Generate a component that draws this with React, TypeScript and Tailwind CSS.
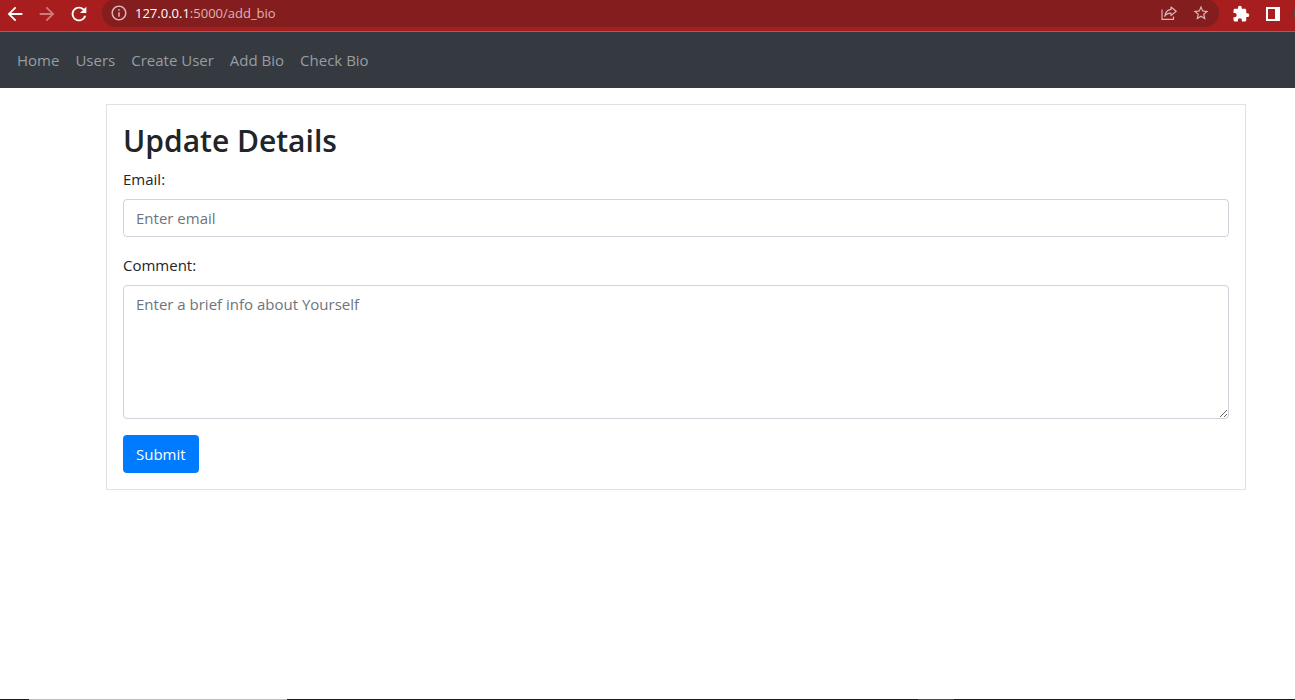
import React from 'react';
import { MdArrowBack, MdArrowForward, MdExtension, MdInfoOutline, MdRefresh, MdStarBorder } from 'react-icons/md';

const links = [
  { label: 'Home', href: '#home' },
  { label: 'Users', href: '#users' },
  { label: 'Create User', href: '#create-user' },
  { label: 'Add Bio', href: '#add-bio' },
  { label: 'Check Bio', href: '#check-bio' },
];

function ShareIcon() {
  return (
    <svg width="16" height="16" viewBox="0 0 16 16" fill="none" stroke="currentColor" strokeWidth="1.2">
      <path d="M1 4.5V14.4H12.5V11.5" />
      <path d="M10 2L15.2 6.3L10 10.6V8.2C7 8.2 5 9.3 3.8 11.3C4.2 7.8 6.2 5 10 4.4Z" strokeLinejoin="round" />
    </svg>
  );
}

function SidePanelIcon() {
  return (
    <svg width="14" height="14" viewBox="0 0 14 14" fill="currentColor">
      <path fillRule="evenodd" d="M0 0H14V14H0ZM2 2V12H9V2Z" />
    </svg>
  );
}

function IconButton({ label, className = '', children }: { label: string; className?: string; children: React.ReactNode }) {
  return (
    <button type="button" aria-label={label} className={`flex h-6 w-8 shrink-0 items-center justify-center ${className}`}>
      {children}
    </button>
  );
}

function BrowserBar() {
  return (
    <header className="flex h-8 items-start overflow-hidden border-b border-[#b9555a] bg-[#a81e1f] text-white">
      <div className="-ml-px flex h-[27px] w-[103px] shrink-0 items-center">
        <IconButton label="Back"><MdArrowBack size={22} /></IconButton>
        <IconButton label="Forward" className="text-[#d07a7b]"><MdArrowForward size={22} /></IconButton>
        <IconButton label="Reload"><MdRefresh size={22} /></IconButton>
      </div>
      <div className="-mt-px flex h-7 min-w-0 flex-1 items-center rounded-full bg-[#841d1e] pl-2 text-[#dcb4b5]">
        <MdInfoOutline size={18} className="mr-[7px] shrink-0" />
        <span className="min-w-0 flex-1 truncate pt-px text-[13px]">
          <span className="text-white">127.0.0.1</span>:5000/add_bio
        </span>
        <IconButton label="Share"><ShareIcon /></IconButton>
        <IconButton label="Bookmark"><MdStarBorder size={18} /></IconButton>
        <span className="w-0.5" />
      </div>
      <div className="flex h-[27px] shrink-0 items-center pl-1.5">
        <IconButton label="Extensions"><MdExtension size={18} /></IconButton>
        <IconButton label="Side panel"><SidePanelIcon /></IconButton>
        <span className="ml-[5px] h-2 w-px bg-[#5b4a4c]" />
      </div>
    </header>
  );
}

const control =
  'block w-full rounded border border-[#ced4da] bg-white px-3 py-1.5 text-[15px] leading-6 text-[#495057] placeholder:text-[#6c757d] placeholder:opacity-100';

export default function App() {
  return (
    <div className="flex min-h-screen flex-col bg-white font-['Segoe_UI','Open_Sans',sans-serif] text-[#212529]">
      <BrowserBar />
      <nav className="flex h-14 items-center gap-4 bg-[#343a40] px-[17px] text-[15px] leading-6 text-[#999da0]">
        {links.map((link) => (
          <a key={link.label} href={link.href} className="whitespace-nowrap">
            {link.label}
          </a>
        ))}
      </nav>
      <main className="flex-1 pt-4 pl-[57px]">
        <form className="mx-auto max-w-[1140px] border border-[#dee2e6] p-4" onSubmit={(e) => e.preventDefault()}>
          <h2 className="mb-2 pt-px text-[30px] leading-[37px] font-semibold">Update Details</h2>
          <div className="mb-4">
            <label htmlFor="email" className="mb-2 block text-[15px] leading-6">Email:</label>
            <input id="email" type="email" placeholder="Enter email" className={control} />
          </div>
          <div className="mb-4">
            <label htmlFor="comment" className="mb-2 block text-[15px] leading-6">Comment:</label>
            <textarea id="comment" rows={5} placeholder="Enter a brief info about Yourself" className={`${control} resize-y`} />
          </div>
          <button type="submit" className="block rounded bg-[#007bff] px-[13px] py-[7px] text-[15px] leading-6 text-white">
            Submit
          </button>
        </form>
      </main>
      <footer className="flex h-px bg-[#1b1a1c]">
        <span className="ml-[29px] w-[258px] bg-[#bfbfbf]" />
        <span className="ml-auto mr-[341px] w-9 bg-[#4a4a4a]" />
      </footer>
    </div>
  );
}
